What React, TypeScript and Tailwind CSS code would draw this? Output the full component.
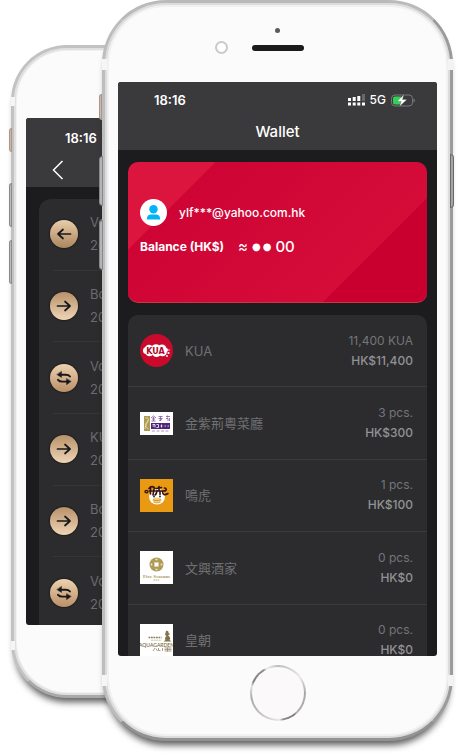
import React from "react";
import type { ReactNode } from "react";

function KuaLogo() {
  return (
    <svg viewBox="0 0 33 33" className="h-[33px] w-[33px]" role="img" aria-label="KUA">
      <circle cx="16.5" cy="16.5" r="16.5" fill="#c90a2c" />
      <g fill="#fff">
        <circle cx="6.500" cy="16.500" r="3.500" />
        <circle cx="9" cy="15" r="4.300" />
        <circle cx="16" cy="15" r="4.800" />
        <circle cx="22" cy="15" r="4.500" />
        <circle cx="9.500" cy="18" r="4.300" />
        <circle cx="16.500" cy="18.500" r="4.500" />
        <circle cx="22.500" cy="18" r="4.300" />
        <circle cx="26" cy="16" r="2" />
        <circle cx="28.500" cy="19" r="1.100" />
        <circle cx="27" cy="22" r="0.900" />
        <circle cx="29" cy="16" r="0.700" />
      </g>
      <text x="15.500" y="19.500" textAnchor="middle" fontSize="8" fontWeight="700" fill="#b00a2a" fontFamily="DejaVu Sans, sans-serif">
        KUA
      </text>
    </svg>
  );
}

function BauhiniaLogo() {
  return (
    <svg viewBox="0 0 33 23" className="h-[23px] w-[33px]" aria-hidden="true">
      <rect width="33" height="23" fill="#fff" />
      <rect x="4" y="4" width="6" height="15" fill="#ad9b56" />
      <path d="M5.500 6c3-1 3.500 2 1.500 4s-2 5 1.500 7M8.500 8c-1 3-3 4-3.500 9" stroke="#efe6c4" strokeWidth="0.800" fill="none" />
      <g stroke="#8b69a5" strokeWidth="0.900" fill="none">
        <path d="M11 6l2.500-2L16 6M12 7h3M13.500 5v4M11.500 9h4" />
        <path d="M18.500 4.500h4M18.500 6.500h4M20.500 4v5M19 8.500l3-1" />
        <path d="M26 4.500h4M27.500 3.500v2M26 6.500h2v2.500M29.500 6v3" />
      </g>
      <rect x="11" y="11" width="19" height="6" fill="#51257b" />
      <path d="M12.500 12.500h2.500v3M12.500 14h2M16.500 12.500h2v3h-2M20.500 14h2M21.500 12.500v3M24.500 14h1.500M27.500 14h1.500" stroke="#fff" strokeWidth="0.800" fill="none" />
      <path d="M12 19h17" stroke="#a48ab9" strokeWidth="0.900" strokeDasharray="3 1.500" />
    </svg>
  );
}

function TigerLogo() {
  return (
    <svg viewBox="0 0 33 33" className="h-[33px] w-[33px]" aria-hidden="true">
      <rect width="33" height="33" fill="#e99a12" />
      <ellipse cx="17" cy="17.500" rx="8" ry="8" fill="#fff" />
      <ellipse cx="17" cy="21" rx="4.500" ry="2.500" fill="#f2cf7c" />
      <path d="M13 20.500c2 1.500 6 1.500 8 0M13.500 23c2 1.200 5 1.200 7 0" stroke="#b57c1a" strokeWidth="0.700" fill="none" />
      <g stroke="#35120e" fill="none" strokeLinecap="round">
        <path d="M5 12.500c0-1.500 3-1.500 3 0s-3 2-3 0z" strokeWidth="1.300" />
        <path d="M9 9.500c2-3 5-2 6 0M9.500 12h6M10.500 9v6M14 10l-1 6" strokeWidth="1.600" />
        <path d="M16.500 9.500l5-1M19 7.500v4M17 11.500c-.5 3-1 4-2 4.500M17.500 12h6c4 0 3-3 1-3M20 12v3.500M22.500 12c0 4 2 4.500 5.500 2.500" strokeWidth="1.600" />
      </g>
      <circle cx="14" cy="17.500" r="0.900" fill="#35120e" />
      <circle cx="20" cy="17.500" r="0.900" fill="#35120e" />
    </svg>
  );
}

function FourSeasonsLogo() {
  return (
    <svg viewBox="0 0 33 33" className="h-[33px] w-[33px]" aria-hidden="true">
      <rect width="33" height="33" fill="#fff" />
      <circle cx="16.500" cy="13.500" r="7" fill="#ad9b56" />
      <rect x="14.500" y="11.500" width="4" height="4" fill="#fff" stroke="#d9cfa6" strokeWidth="0.600" />
      <path d="M15.500 8.500h2M15.500 18.500h2M11.500 12.500v2M21.500 12.500v2" stroke="#efe6c4" strokeWidth="1.500" />
      <text x="16.500" y="26.500" textAnchor="middle" fontSize="5" fontWeight="700" fill="#a8975a" fontFamily="Liberation Serif, serif">
        Five Seasons
      </text>
      <path d="M13.500 29h6" stroke="#aaa9a6" strokeWidth="1" strokeDasharray="1.500 .6" />
    </svg>
  );
}

function AquaGardenLogo() {
  return (
    <svg viewBox="0 0 33 33" className="h-[33px] w-[33px]" aria-hidden="true">
      <rect width="33" height="33" fill="#fff" />
      <path d="M26 7c1.500-.5 3 .5 2.500 2l1.500 1-2 1.500c2 1 3 3 1.500 4.500l2 1.500h-8l2-1.500c-1-1-.5-3 1-4l-1.500-1z" fill="#85714a" />
      <path d="M8.500 13.500h13" stroke="#8b7c5c" strokeWidth="1.500" strokeDasharray="1.800 .7" />
      <path d="M11 16.200h10" stroke="#bab19d" strokeWidth="0.800" strokeDasharray="2 .6" />
      <text x="16.500" y="22.500" textAnchor="middle" fontSize="5" fontWeight="500" fill="#75603a" fontFamily="Lato, sans-serif">
        AQUAGARDEN
      </text>
      <path d="M13 27l2-3M16 24.500l1.500 2.500M18.500 24v2.500h2M22.500 24v3M24.500 25.500h7M24.500 24h7M24.500 27h7M27.500 23.500v4" stroke="#988765" strokeWidth="0.800" fill="none" />
    </svg>
  );
}

type Holding = { name: string; amount: string; value: string; logo: ReactNode };

const holdings: Holding[] = [
  { name: "KUA", amount: "11,400 KUA", value: "HK$11,400", logo: <KuaLogo /> },
  { name: "金紫荊粵菜廳", amount: "3 pcs.", value: "HK$300", logo: <BauhiniaLogo /> },
  { name: "鳴虎", amount: "1 pcs.", value: "HK$100", logo: <TigerLogo /> },
  { name: "文興酒家", amount: "0 pcs.", value: "HK$0", logo: <FourSeasonsLogo /> },
  { name: "皇朝", amount: "0 pcs.", value: "HK$0", logo: <AquaGardenLogo /> },
];

type Kind = "in" | "out" | "swap";

const history: { kind: Kind; title: string }[] = [
  { kind: "in", title: "Vo" },
  { kind: "out", title: "Bo" },
  { kind: "swap", title: "Vo" },
  { kind: "out", title: "KU" },
  { kind: "out", title: "Bo" },
  { kind: "swap", title: "Vo" },
];

const discs: Record<Kind, string> = {
  in: "from-[#e9cda9] to-[#ac865f]",
  out: "from-[#b8926a] to-[#efd5b6]",
  swap: "from-[#eed2b0] to-[#ba9068]",
};

function HistoryIcon({ kind }: { kind: Kind }) {
  return (
    <span className={"-ml-[3px] h-7 w-7 shrink-0 rounded-full bg-linear-to-b shadow-[0_0_2px_#000] " + discs[kind]}>
      <svg viewBox="0 0 28 28" className="h-7 w-7" fill="none" stroke="#17181c" strokeWidth="1.700" strokeLinecap="round" strokeLinejoin="round" aria-hidden="true">
        {kind === "in" && <path d="M20.500 14H8M13 9.500L8 14l5 4.500" />}
        {kind === "out" && <path d="M7.500 14H20M15 9.500l5 4.500-5 4.500" />}
        {kind === "swap" && (
          <>
            <path d="M20 12.500c-1-1.300-2.500-1.800-4.500-1.800H10M8 15.800c1 1.300 2.500 1.800 4.500 1.800H18" strokeWidth="1.900" />
            <path d="M11.500 7.500v6L7 10.700zM16.500 14.800v6l4.500-3.200z" fill="#17181c" strokeWidth="0.400" />
          </>
        )}
      </svg>
    </span>
  );
}

function SignalIcon() {
  return (
    <svg viewBox="0 0 17 12" className="h-3 w-[17px]" fill="#fff" aria-hidden="true">
      <path d="M0 4h3v3H0zM4.700 3h3v4h-3zM9.300 2h3v5h-3z" />
      <path d="M14 0h3v7h-3z" fill="#68686a" />
      <path d="M0 8.500h3v3H0zM4.700 8.500h3v3h-3zM9.300 8.500h3v3h-3zM14 8.500h3v3h-3z" />
    </svg>
  );
}

function BatteryIcon() {
  return (
    <svg viewBox="0 0 24 13" className="h-[13px] w-6" aria-hidden="true">
      <rect x="0.500" y="1" width="21" height="11" rx="3.500" fill="none" stroke="#77787a" />
      <path d="M22.500 4.500c1.800.5 1.800 3.500 0 4z" fill="#77787a" />
      <path d="M4 2.500h6v8H4a2 2 0 0 1-2-2v-4a2 2 0 0 1 2-2z" fill="#32d158" />
      <path d="M13 .5L6 7.500h4.200L8.500 12.500l7.500-7h-4.500z" fill="#fff" stroke="#3a3a3c" strokeWidth="0.300" />
    </svg>
  );
}

function Bands() {
  return (
    <>
      <span className="absolute top-[56px] -left-[3px] h-[11px] w-[5px] bg-[#f5f5f5]" />
      <span className="absolute top-[56px] -right-[3px] h-[11px] w-[5px] bg-[#f3f3f3]" />
      <span className="absolute bottom-[52px] -left-[3px] h-[11px] w-[5px] bg-[#f5f5f5]" />
      <span className="absolute -right-[3px] bottom-[52px] h-[11px] w-[5px] bg-[#f3f3f3]" />
    </>
  );
}

function HistoryPhone() {
  return (
    <section
      aria-label="History"
      className="relative mt-[45px] mr-[162px] mb-[43px] ml-[11px] flex flex-col rounded-[56px] border-[3px] border-[#c2c2c3] border-b-[#a9a9a9] bg-[#fbfbfc] px-3 py-[70px] shadow-[inset_0_0_0_2px_#e0e0e0,inset_0_0_0_3px_#f1f1f1,0_8px_7px_-4px_rgba(0,0,0,0.65)] [grid-area:1/1]"
    >
      <span className="absolute top-[49px] -left-[3px] h-[9px] w-1 bg-[#f5f5f5]" />
      <span className="absolute bottom-[45px] -left-[3px] h-[9px] w-1 bg-[#f5f5f5]" />
      <span className="absolute top-[80px] -left-[5px] h-6 w-[3px] rounded-l-sm border border-[#a9978b] bg-[#cdb9aa]" />
      <span className="absolute top-[135px] -left-[5px] h-11 w-[3px] rounded-l-sm border border-[#8b8b8d] bg-[#bbbbbc]" />
      <span className="absolute top-[192px] -left-[5px] h-11 w-[3px] rounded-l-sm border border-[#8b8b8d] bg-[#bbbbbc]" />
      <div className="h-0 grow overflow-hidden rounded-[3px] bg-[#1c1c1e]">
        <header className="h-[69px] bg-[#3a3a3c] pt-2.5 pl-[26px]">
          <p className="pl-[13px] text-[13px] leading-5 font-semibold">18:16</p>
          <button type="button" aria-label="Back" className="mt-3 block">
            <svg viewBox="0 0 12 20" className="h-5 w-3" fill="none" stroke="#fff" strokeWidth="1.500" aria-hidden="true">
              <path d="M10.500 1L1.500 10l9 9" />
            </svg>
          </button>
        </header>
        <ul className="mt-3 ml-[13px] grid h-[430px] auto-rows-fr rounded-tl-xl bg-[#2c2c2e]">
          {history.map((item, i) => (
            <li key={i} className="ml-[14px] flex items-center gap-3 border-b border-[#353537]">
              <HistoryIcon kind={item.kind} />
              <div className="text-[13px] leading-[23px] text-[#6b6b6f]">
                <p>{item.title}</p>
                <p>20</p>
              </div>
            </li>
          ))}
        </ul>
      </div>
    </section>
  );
}

function BalanceCard() {
  return (
    <section className="h-[141px] rounded-[10px] border-b border-[#cf3546] bg-[linear-gradient(315deg,#c9002f_73px,#d50b38_74px,#ce0435_248px,#dc153f_249px)] px-3 pt-[37px]">
      <div className="flex items-center gap-3">
        <svg viewBox="0 0 27 27" className="h-[27px] w-[27px]" aria-hidden="true">
          <circle cx="13.500" cy="13.500" r="13.500" fill="#fff" />
          <circle cx="13.500" cy="10.200" r="4.200" fill="#00b4fb" />
          <path d="M7 20.500v-1.500a4 4 0 0 1 4-3.500h5a4 4 0 0 1 4 3.500v1.500z" fill="#00b4fb" />
        </svg>
        <p className="text-xs leading-5 font-medium">ylf***@yahoo.com.hk</p>
      </div>
      <div className="mt-[11px] flex items-center gap-3.5">
        <h2 className="text-xs leading-5 font-bold whitespace-nowrap">Balance (HK$)</h2>
        <p className="flex items-center gap-1 text-[15px] leading-5">
          <span>≈</span>
          <span className="flex gap-0.5 font-['DejaVu_Sans',sans-serif] text-[10px]">
            <span>●</span>
            <span>●</span>
          </span>
          <span className="font-medium">00</span>
        </p>
      </div>
    </section>
  );
}

function WalletPhone() {
  return (
    <section
      aria-label="Wallet"
      className="relative mr-[9px] ml-[102px] rounded-[64px] border-[3px] border-t-[#bababb] border-r-[#9b9b9c] border-b-[#929293] border-l-[#bdbdbe] bg-[#fbfbfc] px-[13px] shadow-[inset_0_0_0_2px_#dcdcdd,inset_0_0_0_4px_#f1f1f2,0_8px_7px_-4px_rgba(0,0,0,0.65)] [grid-area:1/1]"
    >
      <Bands />
      <span className="absolute top-[91px] -left-[6px] h-[26px] w-[3px] rounded-l-sm border border-[#a9978b] bg-[#cdb9aa]" />
      <span className="absolute top-[153px] -left-[6px] h-[50px] w-1 rounded-l-sm border border-[#88888a] bg-[#b5b5b6]" />
      <span className="absolute top-[217px] -left-[6px] h-[50px] w-1 rounded-l-sm border border-[#88888a] bg-[#b5b5b6]" />
      <span className="absolute top-[151px] -right-[4px] h-[54px] w-1 rounded-r-sm border border-[#69696b] bg-[#a5a5a6]" />

      <div className="flex h-[79px] flex-col items-center pt-[25px]">
        <span className="h-[5px] w-[5px] rounded-full bg-[#5b5b5d]" />
        <div className="mt-2 grid w-full grid-cols-[1fr_52px_1fr] items-center">
          <span className="mr-6 h-[13px] w-[13px] justify-self-end rounded-full border-2 border-[#c9c9ca] bg-white" />
          <span className="h-1.5 rounded-full bg-[#1b1b1c]" />
        </div>
      </div>

      <div className="aspect-[319/574] overflow-hidden rounded-[3px] bg-[#1c1c1e]">
        <header className="h-[68px] bg-[#3a3a3c] pt-2">
          <div className="flex items-center justify-between pr-[22px] pl-9">
            <p className="text-[13px] leading-5 font-semibold">18:16</p>
            <div className="flex items-center gap-[5px]">
              <SignalIcon />
              <span className="text-xs leading-5 font-medium">5G</span>
              <BatteryIcon />
            </div>
          </div>
          <h1 className="mt-3 text-center text-[15px] leading-5 font-medium">Wallet</h1>
        </header>
        <main className="flex flex-col gap-3 px-2.5 pt-3">
          <BalanceCard />
          <ul className="grid h-[362px] auto-rows-fr rounded-[10px] bg-[#2c2c2e]">
            {holdings.map((h) => (
              <li key={h.name} className="flex items-center gap-3 border-b border-[#3b3b3d] pr-3.5 pl-3">
                {h.logo}
                <p className="grow text-[13px] leading-5 text-[#707073]">{h.name}</p>
                <div className="text-right text-xs leading-5">
                  <p className="text-[#757578]">{h.amount}</p>
                  <p className="font-medium text-[#929295]">{h.value}</p>
                </div>
              </li>
            ))}
          </ul>
        </main>
      </div>

      <div className="flex h-[82px] justify-center pt-[9px]">
        <button
          type="button"
          aria-label="Home"
          className="h-14 w-14 rounded-full bg-[conic-gradient(#bcbcbd,#e9e9e9_15%,#a8a8a9_25%,#b0b0b1_38%,#777_40%,#8c8c8c_47%,#e9e9e9_49%,#c4c4c4_60%,#aaa_72%,#e2e2e2_79%,#828283_82%,#8f8f90_91%,#efefef_93%,#bcbcbd)] p-0.5"
        >
          <span className="block h-full w-full rounded-full bg-[#fbf9fa]" />
        </button>
      </div>
    </section>
  );
}

export default function App() {
  return (
    <div className="grid overflow-hidden bg-white pb-3 font-['Inter','Noto_Sans_CJK_TC',sans-serif] text-white">
      <HistoryPhone />
      <WalletPhone />
    </div>
  );
}
